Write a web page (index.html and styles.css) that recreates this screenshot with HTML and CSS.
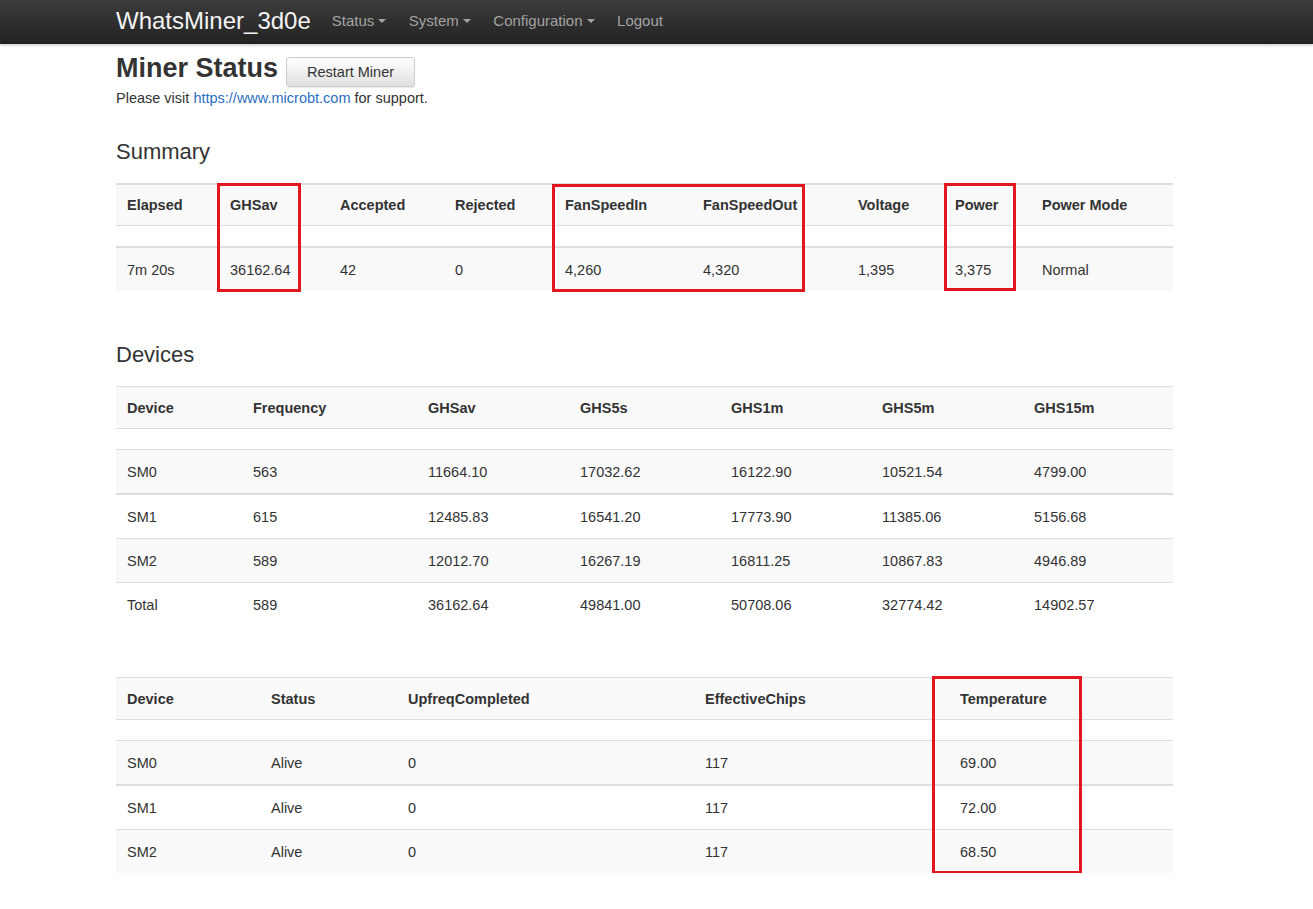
FILE: index.html
```html
<!DOCTYPE html>
<html lang="en">
<head>
<meta charset="utf-8">
<title>Miner Status</title>
<link rel="stylesheet" href="styles.css">
</head>
<body>
<nav class="navbar">
  <div class="container nav-inner">
    <a class="brand" href="#">WhatsMiner_3d0e</a>
    <ul class="nav-links">
      <li><a href="#">Status<span class="caret"></span></a></li>
      <li><a href="#">System<span class="caret"></span></a></li>
      <li><a href="#">Configuration<span class="caret"></span></a></li>
      <li><a href="#">Logout</a></li>
    </ul>
  </div>
</nav>

<main class="container">
  <div class="title-row">
    <h1 class="title">Miner Status</h1>
    <button class="btn" type="button">Restart Miner</button>
  </div>
  <p class="support">Please visit <a href="#">https://www.microbt.com</a> for support.</p>

  <h3 class="section-title summary-title">Summary</h3>
  <div class="table-wrap">
    <table class="grid summary">
      <colgroup>
        <col style="width:103px"><col style="width:110px"><col style="width:115px"><col style="width:110px"><col style="width:138px"><col style="width:155px"><col style="width:97px"><col style="width:87px"><col style="width:142px">
      </colgroup>
      <thead>
        <tr class="head thick"><th>Elapsed</th><th>GHSav</th><th>Accepted</th><th>Rejected</th><th>FanSpeedIn</th><th>FanSpeedOut</th><th>Voltage</th><th>Power</th><th>Power Mode</th></tr>
      </thead>
      <tbody>
        <tr class="empty"><td colspan="9"></td></tr>
        <tr class="thick"><td>7m 20s</td><td>36162.64</td><td>42</td><td>0</td><td>4,260</td><td>4,320</td><td>1,395</td><td>3,375</td><td>Normal</td></tr>
      </tbody>
    </table>
    <div class="mark mark-ghsav"></div>
    <div class="mark mark-fan"></div>
    <div class="mark mark-power"></div>
  </div>

  <h3 class="section-title devices-title">Devices</h3>
  <div class="table-wrap">
    <table class="grid">
      <colgroup>
        <col style="width:126px"><col style="width:175px"><col style="width:152px"><col style="width:151px"><col style="width:151px"><col style="width:152px"><col style="width:150px">
      </colgroup>
      <thead>
        <tr class="head"><th>Device</th><th>Frequency</th><th>GHSav</th><th>GHS5s</th><th>GHS1m</th><th>GHS5m</th><th>GHS15m</th></tr>
      </thead>
      <tbody>
        <tr class="empty"><td colspan="7"></td></tr>
        <tr><td>SM0</td><td>563</td><td>11664.10</td><td>17032.62</td><td>16122.90</td><td>10521.54</td><td>4799.00</td></tr>
        <tr class="thick"><td>SM1</td><td>615</td><td>12485.83</td><td>16541.20</td><td>17773.90</td><td>11385.06</td><td>5156.68</td></tr>
        <tr><td>SM2</td><td>589</td><td>12012.70</td><td>16267.19</td><td>16811.25</td><td>10867.83</td><td>4946.89</td></tr>
        <tr><td>Total</td><td>589</td><td>36162.64</td><td>49841.00</td><td>50708.06</td><td>32774.42</td><td>14902.57</td></tr>
      </tbody>
    </table>
  </div>

  <div class="table-wrap chips-wrap">
    <table class="grid">
      <colgroup>
        <col style="width:144px"><col style="width:137px"><col style="width:297px"><col style="width:255px"><col style="width:224px">
      </colgroup>
      <thead>
        <tr class="head"><th>Device</th><th>Status</th><th>UpfreqCompleted</th><th>EffectiveChips</th><th>Temperature</th></tr>
      </thead>
      <tbody>
        <tr class="empty"><td colspan="5"></td></tr>
        <tr><td>SM0</td><td>Alive</td><td>0</td><td>117</td><td>69.00</td></tr>
        <tr class="thick"><td>SM1</td><td>Alive</td><td>0</td><td>117</td><td>72.00</td></tr>
        <tr><td>SM2</td><td>Alive</td><td>0</td><td>117</td><td>68.50</td></tr>
      </tbody>
    </table>
    <div class="mark mark-temp"></div>
  </div>
</main>
</body>
</html>
```

FILE: styles.css
```css
* { box-sizing: border-box; }

html, body {
  margin: 0;
  padding: 0;
  background: #fff;
}

body {
  font-family: "Liberation Sans", Arial, Helvetica, sans-serif;
  font-size: 14.5px;
  line-height: 20px;
  color: #333;
}

.container {
  width: 1057px;
  margin-left: 116px;
}

/* Navbar */
.navbar {
  height: 44px;
  background: linear-gradient(to bottom, #3c3c3c 0%, #222 100%);
  box-shadow: 0 1px 3px rgba(0, 0, 0, 0.25);
}

.nav-inner {
  display: flex;
  align-items: center;
  height: 44px;
}

.brand {
  color: #f4f4f4;
  font-size: 24px;
  text-decoration: none;
  line-height: 40px;
  margin-top: -2px;
}

.nav-links {
  list-style: none;
  display: flex;
  gap: 22.5px;
  margin: -2px 0 0 21px;
  padding: 0;
}

.nav-links a {
  color: #a3a3a3;
  text-decoration: none;
  font-size: 15px;
  display: flex;
  align-items: center;
}

.caret {
  display: inline-block;
  width: 0;
  height: 0;
  margin-left: 4px;
  border-top: 4px solid #a3a3a3;
  border-left: 4px solid transparent;
  border-right: 4px solid transparent;
}

/* Title */
.title-row {
  display: flex;
  align-items: flex-start;
  padding-top: 9px;
}

.title {
  margin: 0;
  font-size: 27px;
  line-height: 30px;
  font-weight: bold;
  color: #333;
}

.btn {
  margin: 4px 0 0 8px;
  width: 129px;
  height: 30px;
  font-family: inherit;
  font-size: 14.5px;
  color: #333;
  background: linear-gradient(to bottom, #fff 0%, #e0e0e0 100%);
  border: 1px solid #ccc;
  border-radius: 3px;
  box-shadow: inset 0 1px 0 rgba(255, 255, 255, 0.15), 0 1px 1px rgba(0, 0, 0, 0.075);
  padding: 0;
}

.support {
  margin: 1px 0 0;
}

.support a {
  color: #2b6fc4;
  text-decoration: none;
}

.section-title {
  margin: 0;
  font-size: 22px;
  line-height: 26px;
  font-weight: normal;
  color: #333;
}

.summary-title { margin-top: 31px; margin-bottom: 18px; }
.devices-title { margin-top: 51px; margin-bottom: 18px; }

/* Tables */
.table-wrap {
  position: relative;
  width: 1057px;
}

.chips-wrap { margin-top: 51px; }

.grid {
  width: 1057px;
  table-layout: fixed;
  border-collapse: separate;
  border-spacing: 0;
}

.grid th,
.grid td {
  text-align: left;
  vertical-align: middle;
  padding: 0 11px;
  height: 44px;
  border-top: 1px solid #ddd;
  white-space: nowrap;
}

.grid th {
  font-weight: bold;
  height: 42px;
}

.grid tr.thick > td {
  border-top-width: 2px;
  height: 45px;
}

.grid tr.head.thick > th {
  border-top-width: 2px;
  height: 42px;
}

.grid tr.head > th { background: #f9f9f9; }

.grid tr.empty > td {
  height: 21px;
  padding: 0;
}

.grid tbody tr:nth-child(even) > td { background: #f9f9f9; }

/* Highlight annotations */
.mark {
  position: absolute;
  border: 3px solid #e3161f;
  pointer-events: none;
}

.mark-ghsav { left: 101px; top: 0; width: 84px; height: 109px; }
.mark-fan   { left: 436px; top: 1px; width: 253px; height: 108px; }
.mark-power { left: 828px; top: 0; width: 72px; height: 108px; }
.mark-temp  { left: 816px; top: -1px; width: 150px; height: 198px; }
```
